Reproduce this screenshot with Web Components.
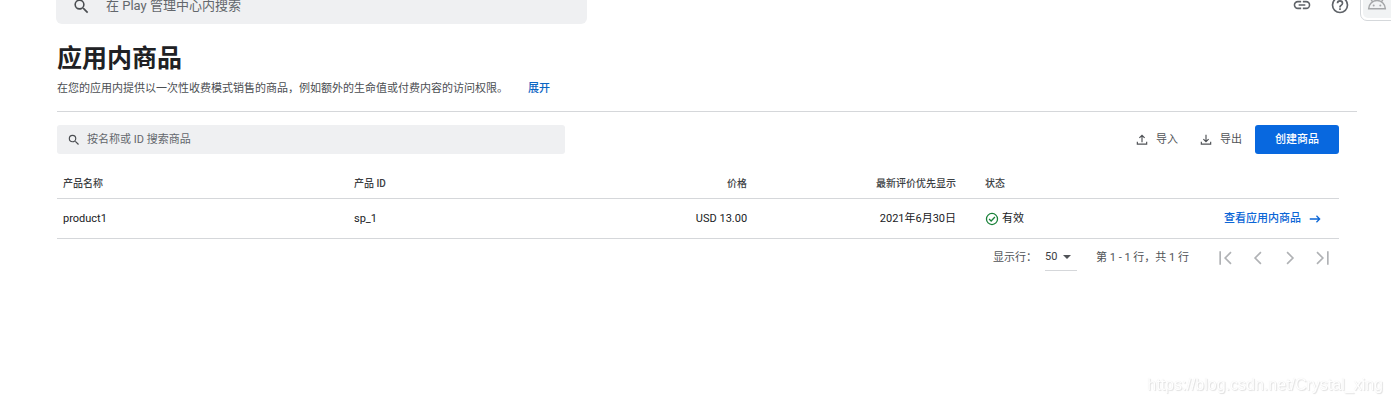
<!DOCTYPE html>
<html lang="zh-CN">
<head>
<meta charset="utf-8">
<title>应用内商品</title>
<style>
body{margin:0;background:#fff;color:#202124;font:11px/16px Roboto,"Noto Sans CJK SC",sans-serif;overflow:hidden}
</style>
</head>
<body>
<products-page></products-page>
<script>
const ICONS = {
  search:'<path d="M15.5 14h-.79l-.28-.27A6.47 6.47 0 0 0 16 9.500 6.500 6.500 0 1 0 9.500 16c1.610 0 3.090-.59 4.230-1.570l.27.28v.79l5 4.990L20.490 19l-4.990-5zm-6 0A4.500 4.500 0 1 1 14 9.500 4.490 4.490 0 0 1 9.500 14z"/>',
  link:'<path d="M3.900 12c0-1.710 1.390-3.100 3.100-3.100h4V7H7a5 5 0 0 0 0 10h4v-1.900H7c-1.710 0-3.100-1.390-3.100-3.100zM8 13h8v-2H8v2zm9-6h-4v1.900h4a3.100 3.100 0 0 1 0 6.200h-4V17h4a5 5 0 0 0 0-10z"/>',
  help:'<path d="M11 18h2v-2h-2v2zm1-16a10 10 0 1 0 0 20 10 10 0 0 0 0-20zm0 18a8 8 0 1 1 0-16 8 8 0 0 1 0 16zm0-14a4 4 0 0 0-4 4h2a2 2 0 1 1 4 0c0 2-3 1.750-3 5h2c0-2.250 3-2.500 3-5a4 4 0 0 0-4-4z"/>',
  android:'<path fill="none" stroke="currentColor" stroke-width="1.800" d="M2 19a10 10 0 0 1 20 0zM6.500 10.500 4 6M17.500 10.500 20 6"/><circle cx="8" cy="15" r="1.200"/><circle cx="16" cy="15" r="1.200"/>',
  upload:'<path fill="none" stroke="currentColor" stroke-width="2" d="M12 16V4M7.500 8.500 12 4l4.500 4.500M4 15v4h16v-4"/>',
  download:'<path fill="none" stroke="currentColor" stroke-width="2" d="M12 3v12M7.500 10.500 12 15l4.500-4.500M4 15v4h16v-4"/>',
  check:'<g fill="none" stroke="currentColor" stroke-width="2.200"><circle cx="12" cy="12" r="9.500"/><path d="m7 12 3.500 3.500L17 8.500"/></g>',
  arrow:'<path fill="none" stroke="currentColor" stroke-width="2.200" d="M3 12h17M14.500 6.500 20 12l-5.500 5.500"/>',
  caret:'<path d="M4 8h16l-8 8z"/>',
  first:'<path fill="none" stroke="currentColor" stroke-width="2" d="M5 4v16M18 5l-7 7 7 7"/>',
  prev:'<path fill="none" stroke="currentColor" stroke-width="2" d="m15.500 5-7 7 7 7"/>',
  next:'<path fill="none" stroke="currentColor" stroke-width="2" d="m8.500 5 7 7-7 7"/>',
  last:'<path fill="none" stroke="currentColor" stroke-width="2" d="M19 4v16M6 5l7 7-7 7"/>'
};
function define(name, html) {
  const template = document.createElement('template');
  template.innerHTML = html;
  customElements.define(name, class extends HTMLElement {
    constructor() {
      super();
      this.attachShadow({mode:'open'}).append(template.content.cloneNode(true));
    }
  });
}
customElements.define('ui-icon', class extends HTMLElement {
  connectedCallback() {
    if (this.shadowRoot) return;
    this.attachShadow({mode:'open'}).innerHTML = `<style>:host{display:inline-flex;flex:none;width:var(--size,14px);height:var(--size,14px)}svg{width:100%;height:100%;fill:currentColor}</style><svg viewBox="0 0 24 24" aria-hidden="true">${ICONS[this.getAttribute('name')]}</svg>`;
  }
});
customElements.define('search-field', class extends HTMLElement {
  connectedCallback() {
    if (this.shadowRoot) return;
    this.attachShadow({mode:'open'}).innerHTML = `<style>
      :host{display:block;color:#5f6368}
      label{box-sizing:border-box;display:flex;align-items:center;gap:var(--gap,6px);height:var(--height,29px);padding:0 10px 0 var(--inset,10px);background:#eff0f2;border-radius:var(--radius,3px)}
      input{flex:1;min-width:0;border:0;padding:0;background:none;outline:0;font:inherit;color:inherit}
      input::placeholder{color:#63676c;opacity:1}
      ui-icon{color:#4a4d51}
    </style><label><ui-icon name="search"></ui-icon><input type="text" aria-label="${this.getAttribute('label')}" placeholder="${this.getAttribute('label')}"></label>`;
  }
});
define('top-bar', `<style>
  :host{display:flex;align-items:flex-start;justify-content:space-between;margin-top:-12px;padding-left:56px}
  search-field{flex:0 1 531px;font-size:13px;--height:36px;--radius:6px;--inset:16px;--gap:15px;--size:19px}
  nav{display:flex;align-items:center;gap:18px;color:#5f6368}
  button{display:flex;border:0;background:none;padding:0;color:inherit;--size:20px}
  .account{align-self:flex-start;box-sizing:border-box;width:41px;height:33px;margin-left:-8px;margin-right:-10px;padding:2px;border:1px solid #d5d8db;border-radius:7px}
  .account span{display:flex;flex:1;height:27px;box-sizing:border-box;padding:2px 7px 0 0;align-items:flex-start;justify-content:center;background:#f1f3f4;border-radius:5px;color:#a5a7a9}
</style>
<search-field label="在 Play 管理中心内搜索"></search-field>
<nav><button aria-label="复制链接"><ui-icon name="link"></ui-icon></button><button aria-label="帮助"><ui-icon name="help"></ui-icon></button><button class="account" aria-label="应用"><span><ui-icon name="android"></ui-icon></span></button></nav>`);
define('page-heading', `<style>
  :host{display:block;padding:19px 0 14px;border-bottom:1px solid #d5d7da}
  h1{margin:0 0 6px;font-size:25px;line-height:32px;font-weight:700}
  p{display:flex;gap:20px;margin:0;color:#4b4e52}
  a{color:#0b66c3;font-weight:500;text-decoration:none}
</style><h1><slot name="title"></slot></h1><p><slot></slot><a href="#more">展开</a></p>`);
define('product-toolbar', `<style>
  :host{display:flex;align-items:center;justify-content:space-between}
  search-field{flex:0 1 508px}
  div{display:flex;align-items:center;gap:13px}
  button{display:flex;align-items:center;gap:7px;height:29px;padding:0;border:0;background:none;color:#505357;font:inherit}
  button + button{margin-left:8px}
  button.primary{justify-content:center;width:84px;margin-left:0;background:#0868df;color:#fff;border-radius:3px;font-weight:500}
</style><search-field label="按名称或 ID 搜索商品"></search-field>
<div><button><ui-icon name="upload"></ui-icon>导入</button><button><ui-icon name="download"></ui-icon>导出</button><button class="primary">创建商品</button></div>`);
define('product-table', `<style>
  :host{display:block}
  table{width:100%;border-collapse:separate;border-spacing:0;table-layout:fixed}
  th,td{box-sizing:border-box;padding:0 6px;text-align:left;border-bottom:1px solid #d5d7da}
  th{height:30px;font-size:10px;font-weight:500;color:#3c4043}
  td{height:40px}
  .num{text-align:right}
  .state{padding-left:23px}
  .go{padding-right:17px;text-align:right}
  .name{width:22.700%}.id{width:15%}.price{width:16.600%}.date{width:16.300%}.status{width:13%}
  td span{display:flex;align-items:center;gap:3px}
  td span ui-icon{color:#188038}
  a{display:inline-flex;align-items:center;gap:7px;color:#0b66d6;font-weight:500;text-decoration:none}
</style><table><thead><tr><th class="name">产品名称</th><th class="id">产品 ID</th><th class="price num">价格</th><th class="date num">最新评价优先显示</th><th class="status state">状态</th><th class="go"></th></tr></thead>
<tbody><tr><td>product1</td><td>sp_1</td><td class="num">USD 13.00</td><td class="num">2021年6月30日</td><td class="state"><span><ui-icon name="check"></ui-icon>有效</span></td><td class="go"><a href="#product">查看应用内商品<ui-icon name="arrow"></ui-icon></a></td></tr></tbody></table>`);
define('table-pager', `<style>
  :host{display:flex;align-items:center;justify-content:flex-end;height:37px;padding-right:7px;color:#505357}
  label{display:flex;align-items:center;gap:8px}
  .pick{display:grid;align-items:center;width:32px;height:26px;border-bottom:1px solid #d5d7da}
  select{grid-area:1/1;appearance:none;width:100%;padding:0;border:0;background:none;font:inherit;color:#3c4043}
  .pick ui-icon{grid-area:1/1;justify-self:end;margin-right:4px;pointer-events:none;--size:12px}
  output{margin:0 27px 0 19px}
  nav{display:flex;gap:12px;--size:20px}
  button{display:flex;padding:0;border:0;background:none;color:#b0b2b5}
</style><label>显示行：<span class="pick"><select><option>50</option></select><ui-icon name="caret"></ui-icon></span></label>
<output>第 1 - 1 行，共 1 行</output>
<nav><button disabled aria-label="第一页"><ui-icon name="first"></ui-icon></button><button disabled aria-label="上一页"><ui-icon name="prev"></ui-icon></button><button disabled aria-label="下一页"><ui-icon name="next"></ui-icon></button><button disabled aria-label="最后一页"><ui-icon name="last"></ui-icon></button></nav>`);
define('page-watermark', `<style>
  :host{position:fixed;right:8px;bottom:8px;font:16px/20px "Liberation Sans",sans-serif;color:#fff;text-shadow:1px 1px 1px #e0e0e0,0 0 1px #e4e4e4}
</style><slot></slot>`);
define('products-page', `<style>
  :host{display:flow-root}
  main{padding:0 34px 0 57px}
  section{display:grid;padding:13px 18px 0 0}
  product-table{margin-top:15px}
</style><top-bar></top-bar><main><page-heading><span slot="title">应用内商品</span>在您的应用内提供以一次性收费模式销售的商品，例如额外的生命值或付费内容的访问权限。</page-heading>
<section><product-toolbar></product-toolbar><product-table></product-table><table-pager></table-pager></section></main>
<page-watermark>https://blog.csdn.net/Crystal_xing</page-watermark>`);
</script>
</body>
</html>
